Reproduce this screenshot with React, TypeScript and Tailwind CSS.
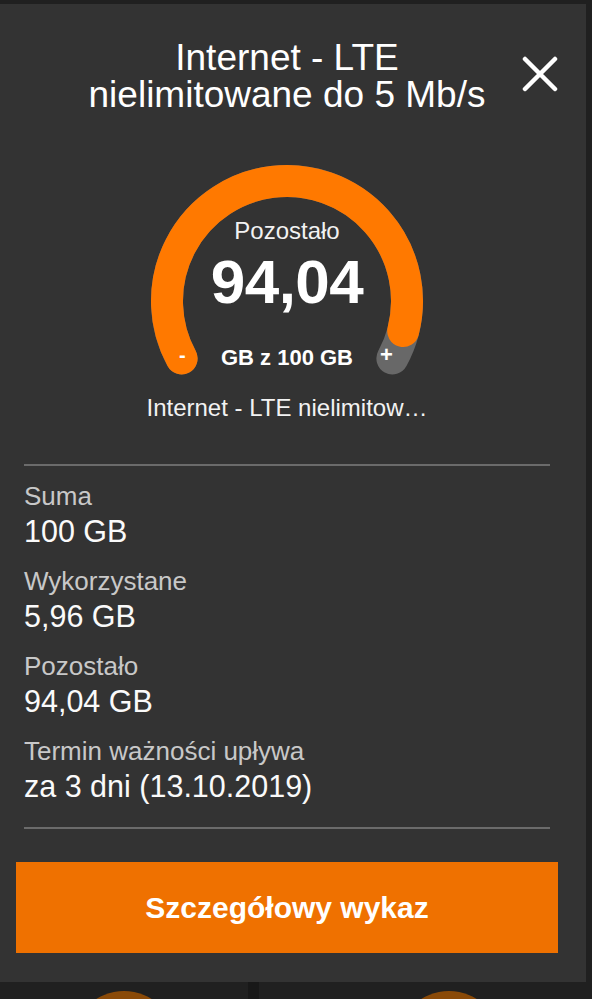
import React from "react";

const details = [
  { label: "Suma", value: "100 GB" },
  { label: "Wykorzystane", value: "5,96 GB" },
  { label: "Pozostało", value: "94,04 GB" },
  { label: "Termin ważności upływa", value: "za 3 dni (13.10.2019)" },
];

function Gauge() {
  // arc: centre (150,151), r 120, spans 237.2deg, 5.96% used shown grey at the end
  return (
    <div className="relative w-[300px] h-[230px] mx-auto">
      <svg className="absolute inset-0" width="300" height="230" viewBox="0 0 300 230">
        <path
          d="M 44.6 208.4 A 120 120 0 1 1 255.4 208.4"
          fill="none"
          stroke="#686868"
          strokeWidth="32"
          strokeLinecap="round"
        />
        <path
          d="M 44.6 208.4 A 120 120 0 1 1 266.2 181"
          fill="none"
          stroke="#ff7900"
          strokeWidth="32"
          strokeLinecap="round"
        />
      </svg>
      <span className="absolute left-[42px] top-[193px] text-[20px] font-bold leading-[24px] text-white">-</span>
      <span className="absolute left-[243px] top-[193px] text-[22px] font-bold leading-[24px] text-white">+</span>
      <div className="relative flex flex-col items-center pt-[66px]">
        <p className="text-[24px] leading-[30px] text-[#f2f2f2]">Pozostało</p>
        <p className="mt-[1px] text-[62px] font-bold leading-[70px] text-white tracking-[-0.5px]">94,04</p>
        <p className="mt-[29px] text-[22px] font-bold leading-[24px] text-white">GB z 100 GB</p>
      </div>
    </div>
  );
}

export default function App() {
  return (
    <div
      className="h-[999px] w-[592px] overflow-hidden bg-[#202020] pt-[4px]"
      style={{ fontFamily: '"Liberation Sans", Arial, sans-serif' }}
    >
      <div className="relative w-[586px] h-[978px] bg-[#333333] pt-[35px]">
        <button className="absolute left-[521px] top-[51px] w-[38px] h-[38px] flex items-center justify-center">
          <svg width="36" height="36" viewBox="0 0 36 36">
            <path d="M3 3 L33 33 M33 3 L3 33" stroke="#ffffff" strokeWidth="4.5" strokeLinecap="round" />
          </svg>
        </button>

        <div className="ml-[24px] w-[526px]">
          <h1 className="text-center text-[37px] leading-[37px] text-white">
            Internet - LTE
            <br />
            nielimitowane do 5 Mb/s
          </h1>

          <div className="mt-[37px]">
            <Gauge />
          </div>

          <p className="mt-[13px] text-center text-[24px] leading-[30px] text-[#f2f2f2]">
            Internet - LTE nielimitow…
          </p>

          <div className="mt-[41px] h-[2px] bg-[#6b6b6b]" />

          <div className="mt-[15px] flex flex-col gap-[17px]">
            {details.map((d) => (
              <div key={d.label}>
                <p className="text-[26px] leading-[30px] text-[#c8c8c8]">{d.label}</p>
                <p className="mt-[2px] text-[30.5px] leading-[36px] text-[#fafafa]">{d.value}</p>
              </div>
            ))}
          </div>

          <div className="mt-[23px] h-[2px] bg-[#6b6b6b]" />
        </div>

        <button className="ml-[16px] mt-[33px] w-[542px] h-[91px] bg-[#ef7100] text-[30px] font-bold text-white">
          Szczegółowy wykaz
        </button>
      </div>

      <div className="flex h-[17px] overflow-hidden">
        <div className="w-[248px] flex justify-center">
          <div className="mt-[9px] w-[104px] h-[104px] shrink-0 rounded-full bg-[#8a4a08]" />
        </div>
        <div className="w-[11px] bg-[#181818]" />
        <div className="flex-1 pl-[138px]">
          <div className="mt-[9px] w-[104px] h-[104px] rounded-full bg-[#8a4a08]" />
        </div>
      </div>
    </div>
  );
}
